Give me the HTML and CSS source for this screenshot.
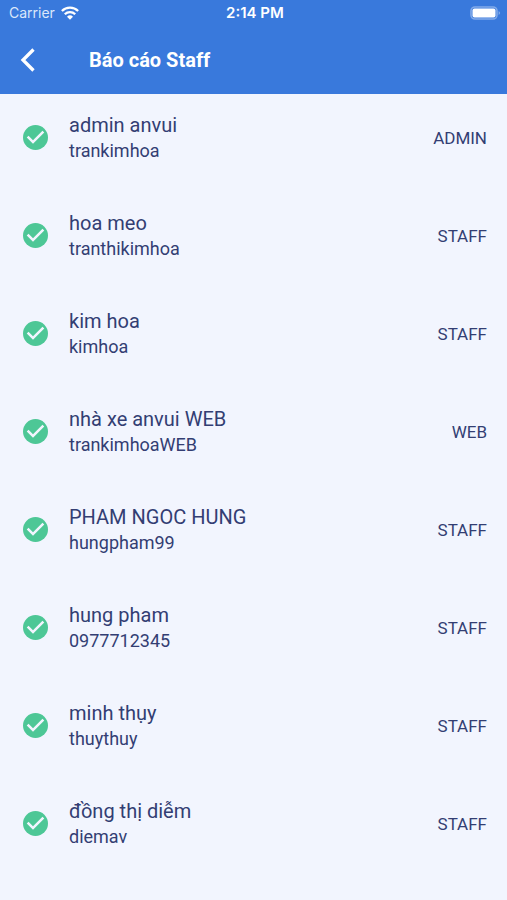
FILE: index.html
```html
<!DOCTYPE html>
<html lang="vi">
<head>
<meta charset="utf-8">
<meta name="viewport" content="width=device-width, initial-scale=1">
<title>Báo cáo Staff</title>
<link rel="stylesheet" href="styles.css">
</head>
<body>
<svg class="defs" aria-hidden="true"><symbol id="check" viewBox="2 2 20 20"><circle cx="12" cy="12" r="10" fill="#4dc796"/><path d="M10 17l-5-5 1.410-1.410L10 14.170l7.590-7.590L19 8z" fill="#f2f5fe"/></symbol></svg>
<header class="top">
  <div class="status">
    <div class="carrier"><span>Carrier</span>
      <svg class="wifi" viewBox="0 0 18 14" aria-hidden="true"><path d="M.9 5a11.500 11.500 0 0 1 16.200 0M3.800 8.200a7.400 7.400 0 0 1 10.400 0" fill="none" stroke="#fff" stroke-width="2.300"/><path d="M9 13.700L6 10.700a4.300 4.300 0 0 1 6 0z" fill="#fff"/></svg>
    </div>
    <span class="time">2:14 PM</span>
    <svg class="battery" viewBox="0 0 31 14" aria-hidden="true"><rect x="1" y="1" width="26" height="12" rx="4" fill="none" stroke="#83abe9" stroke-width="1.600"/><rect x="2.500" y="2.500" width="23" height="9" rx="2" fill="#fff"/><path d="M28.600 5q3 2 0 4z" fill="#83abe9"/></svg>
  </div>
  <div class="bar">
    <button class="back" aria-label="Back"><svg viewBox="0 0 16 24" aria-hidden="true"><path d="M13.500 1.500L3 12 13.500 22.500" fill="none" stroke="#fff" stroke-width="3.300"/></svg></button>
    <h1>Báo cáo Staff</h1>
  </div>
</header>
<main>
<ul class="list">
<li class="row"><svg class="check"><use href="#check"/></svg><div class="who"><p class="name">admin anvui</p><p class="user">trankimhoa</p></div><span class="role">ADMIN</span></li>
<li class="row"><svg class="check"><use href="#check"/></svg><div class="who"><p class="name">hoa meo</p><p class="user">tranthikimhoa</p></div><span class="role">STAFF</span></li>
<li class="row"><svg class="check"><use href="#check"/></svg><div class="who"><p class="name">kim hoa</p><p class="user">kimhoa</p></div><span class="role">STAFF</span></li>
<li class="row"><svg class="check"><use href="#check"/></svg><div class="who"><p class="name">nhà xe anvui WEB</p><p class="user">trankimhoaWEB</p></div><span class="role">WEB</span></li>
<li class="row"><svg class="check"><use href="#check"/></svg><div class="who"><p class="name">PHAM NGOC HUNG</p><p class="user">hungpham99</p></div><span class="role">STAFF</span></li>
<li class="row"><svg class="check"><use href="#check"/></svg><div class="who"><p class="name">hung pham</p><p class="user">0977712345</p></div><span class="role">STAFF</span></li>
<li class="row"><svg class="check"><use href="#check"/></svg><div class="who"><p class="name">minh thụy</p><p class="user">thuythuy</p></div><span class="role">STAFF</span></li>
<li class="row"><svg class="check"><use href="#check"/></svg><div class="who"><p class="name">đồng thị diễm</p><p class="user">diemav</p></div><span class="role">STAFF</span></li>
</ul>
</main>
</body>
</html>
```
FILE: styles.css
```css
* { box-sizing: border-box; }
body { margin: 0; min-height: 100vh; background: #f2f5fe; color: #333e73; font-family: Roboto, sans-serif; }
h1, p, ul { margin: 0; padding: 0; }
.defs { display: none; }
.top { background: #3979dc; color: #fff; }
.status { display: grid; grid-template-columns: 1fr auto 1fr; align-items: center; height: 26px; padding: 0 6px 0 9px; font: 14px/26px Inter, sans-serif; }
.carrier { display: flex; align-items: center; gap: 6px; color: #dbe7fa; }
.wifi { width: 18px; height: 14px; }
.time { font-size: 15px; font-weight: 600; color: #fff; }
.battery { width: 31px; height: 14px; justify-self: end; }
.bar { display: flex; align-items: center; height: 68px; padding-left: 20px; }
.back { display: flex; width: 69px; padding: 0; border: 0; background: none; cursor: pointer; }
.back svg { width: 16px; height: 24px; }
h1 { font-size: 20px; line-height: 24px; font-weight: 700; }
.list { list-style: none; padding-top: 18px; }
.row { display: flex; align-items: center; padding: 0 20px 0 23px; margin-bottom: 47px; }
.check { width: 25px; height: 25px; flex: none; margin-right: 21px; }
.who { flex: 1; }
.name { font-size: 20px; line-height: 26px; }
.user { font-size: 18px; line-height: 25px; }
.role { font-size: 17px; line-height: 24px; }
```
